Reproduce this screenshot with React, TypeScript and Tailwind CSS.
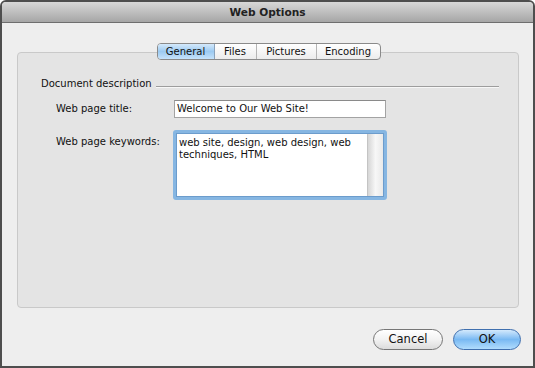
import React from "react";

export default function App() {
  const font = { fontFamily: '"DejaVu Sans", "Noto Sans", sans-serif' };
  return (
    <div className="w-[535px] h-[368px] bg-white" style={font}>
      <div className="w-[535px] h-[368px] flex flex-col border-2 border-[#4e4e4e] rounded-t-[6px] overflow-hidden bg-[#eeeeee]">
        {/* Title bar */}
        <div className="h-[21px] shrink-0 flex items-center justify-center bg-gradient-to-b from-[#d8d8d8] to-[#a6a6a6] border-b border-[#6e6e6e]">
          <span className="text-[10.6px] font-bold text-[#222] leading-none">Web Options</span>
        </div>

        {/* Body */}
        <div className="flex-1 flex flex-col pt-[20px] pl-[15px] pr-[12px]">
          {/* Tabs */}
          <div className="relative z-10 flex justify-center pr-[1px]">
            <div className="flex h-[17px] rounded-[4px] border border-[#8a8a8a] overflow-hidden text-[10px] text-[#111] bg-gradient-to-b from-[#ffffff] to-[#ececec]">
              <div className="w-[57px] flex items-center justify-center bg-gradient-to-b from-[#d4e9fb] via-[#9ccaf1] to-[#c6e3fb] border-r border-[#8aa2bb]">
                General
              </div>
              <div className="w-[42px] flex items-center justify-center border-r border-[#b5b5b5]">Files</div>
              <div className="w-[60px] flex items-center justify-center border-r border-[#b5b5b5]">Pictures</div>
              <div className="w-[63px] flex items-center justify-center">Encoding</div>
            </div>
          </div>

          {/* Group box */}
          <div className="mt-[-8px] mr-[2px] h-[256px] rounded-[4px] border border-[#c9c9c9] bg-[#e4e4e4] pt-[24px] pl-[23px] pr-[19px] text-[10px] text-[#111]">
            <div className="flex items-center h-[14px]">
              <span className="leading-[14px]">Document description</span>
              <div className="flex-1 ml-[4px] mt-[6px] flex flex-col">
                <div className="h-px bg-[#9d9d9d]" />
                <div className="h-px bg-[#f7f7f7]" />
              </div>
            </div>

            <div className="mt-[9px] pl-[15px] flex flex-col gap-[12px]">
              <div className="flex items-center">
                <div className="w-[118px] leading-[14px]">Web page title:</div>
                <div className="w-[212px] h-[18px] bg-white border border-[#a3a3a3] border-t-[#8a8a8a] flex items-center pl-[2px] leading-none">
                  Welcome to Our Web Site!
                </div>
              </div>
              <div className="flex items-start">
                <div className="w-[117px] pt-[5px] leading-[14px]">Web page keywords:</div>
                <div className="w-[214px] h-[70px] rounded-[3px] border-[3px] border-[#86b6e2] bg-white flex">
                  <div className="flex-1 border border-[#6c9ccc] flex">
                    <div className="flex-1 pl-[2px] pt-[3px] leading-[12px]">
                      web site, design, web design, web
                      <br />
                      techniques, HTML
                    </div>
                    <div className="w-[16px] border-l border-[#c4c4c4] bg-gradient-to-r from-[#d6d6d6] via-[#f7f7f7] to-[#e9e9e9]" />
                  </div>
                </div>
              </div>
            </div>
          </div>

          {/* Buttons */}
          <div className="mt-[21px] flex justify-end gap-[10px] pr-[0px] text-[11.5px] text-[#111]">
            <div className="w-[70px] h-[21px] rounded-full border border-[#767676] bg-gradient-to-b from-[#ffffff] via-[#f2f2f2] to-[#dcdcdc] flex items-center justify-center leading-none">
              Cancel
            </div>
            <div className="w-[68px] h-[21px] rounded-full border border-[#3f6fae] bg-gradient-to-b from-[#d3e9fc] via-[#79b9f2] to-[#b0dcfd] flex items-center justify-center leading-none">
              OK
            </div>
          </div>
        </div>
      </div>
    </div>
  );
}
